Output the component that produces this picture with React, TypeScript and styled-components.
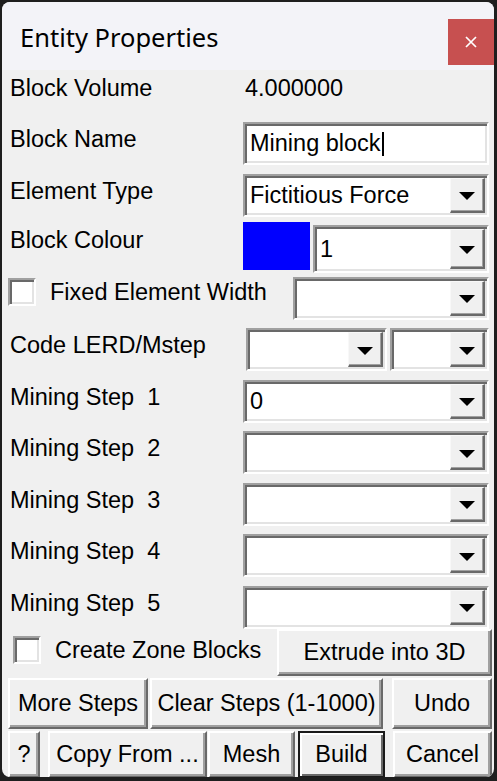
import React from "react";
import styled, { createGlobalStyle } from "styled-components";

const Global = createGlobalStyle`
  html, body { margin: 0; padding: 0; background: #1e1e1e; }
  body { width: 497px; height: 781px; overflow: hidden; }
  #root { padding: 2px 3px 4px 2px; }
`;

const Window = styled.div`
  width: 492px;
  height: 775px;
  background: #f0f0f0;
  border-radius: 8px;
  overflow: hidden;
  display: flex;
  flex-direction: column;
  font-family: "Liberation Sans", Arial, sans-serif;
  font-size: 23.5px;
  color: #000;
`;

const TitleBar = styled.div`
  height: 68px;
  flex: none;
  background: #f3f3f8;
  display: flex;
  align-items: flex-start;
  justify-content: space-between;
`;

const Title = styled.div`
  font-family: "Noto Sans", "Open Sans", sans-serif;
  font-size: 25.5px;
  line-height: 34px;
  padding: 18px 0 0 18px;
`;

const CloseButton = styled.div`
  width: 46px;
  height: 46px;
  margin-top: 17px;
  background: #c75050;
  display: flex;
  align-items: center;
  justify-content: center;
`;

const Form = styled.div`
  display: grid;
  grid-template-columns: 233px 246px;
  grid-auto-rows: 43px;
  row-gap: 8.5px;
  padding: 0.5px 5px 0 8px;
`;

const Label = styled.div<{ $pt?: number }>`
  line-height: 27px;
  padding-top: ${(p) => p.$pt ?? 4}px;
  white-space: pre;
`;

const Value = styled(Label)`
  padding-left: 2px;
`;

const Field = styled.div`
  display: flex;
  align-items: flex-start;
`;

const Sunken = styled.div<{ $w?: number; $h?: number; $ml?: number; $mr?: number }>`
  box-sizing: border-box;
  flex: none;
  width: ${(p) => (p.$w ? `${p.$w}px` : "100%")};
  height: ${(p) => p.$h ?? 43}px;
  margin-left: ${(p) => p.$ml ?? 0}px;
  margin-right: ${(p) => p.$mr ?? 0}px;
  border: 2px solid;
  border-color: #a0a0a0 #ffffff #ffffff #a0a0a0;
  box-shadow: inset 2px 2px 0 #696969, inset -2px -2px 0 #e3e3e3;
  padding: 2px;
  background: #fff;
  display: flex;
  align-items: stretch;
`;

const FieldText = styled.div`
  flex: 1;
  min-width: 0;
  padding-left: 3px;
  display: flex;
  align-items: center;
  white-space: pre;
  overflow: hidden;
`;

const Caret = styled.span`
  display: inline-block;
  width: 2px;
  height: 24px;
  background: #000;
  margin-left: 1px;
`;

const DropButton = styled.div`
  width: 35px;
  flex: none;
  box-sizing: border-box;
  background: #f0f0f0;
  border-style: solid;
  border-width: 1px 2px 2px 1px;
  border-color: #f8f8f8 #696969 #696969 #f8f8f8;
  box-shadow: inset -1px -1px 0 #a0a0a0;
  display: flex;
  align-items: center;
  justify-content: center;
  &::after {
    content: "";
    border-left: 8px solid transparent;
    border-right: 8px solid transparent;
    border-top: 8px solid #000;
    margin-top: 3px;
  }
`;

const Swatch = styled.div`
  width: 67px;
  height: 48px;
  margin-top: -3px;
  margin-right: 3px;
  background: #0000ff;
  flex: none;
`;

const CheckCell = styled.div`
  display: flex;
  align-items: flex-start;
  margin-left: -2px;
  white-space: nowrap;
`;

const CheckBox = styled.div<{ $mt?: number }>`
  width: 28px;
  height: 28px;
  flex: none;
  box-sizing: border-box;
  margin-top: ${(p) => p.$mt ?? 0}px;
  background: #fff;
  border: 2px solid;
  border-color: #a0a0a0 #ffffff #ffffff #a0a0a0;
  box-shadow: inset 2px 2px 0 #696969, inset -2px -2px 0 #e3e3e3;
`;

const CheckText = styled.div<{ $pt?: number }>`
  margin-left: 14px;
  line-height: 27px;
  padding-top: ${(p) => p.$pt ?? 0}px;
`;

const Footer = styled.div`
  display: flex;
  flex-direction: column;
  gap: 2px;
  padding: 0 2px 0 6px;
`;

const FooterRow = styled.div<{ $h: number }>`
  display: flex;
  height: ${(p) => p.$h}px;
  flex: none;
`;

const CheckArea = styled.div`
  width: 269px;
  display: flex;
  align-items: center;
  padding-left: 5px;
  box-sizing: border-box;
  margin-top: -4px;
`;

const Btn = styled.div<{ $w: number; $ml?: number; $default?: boolean }>`
  box-sizing: border-box;
  width: ${(p) => p.$w}px;
  margin-left: ${(p) => p.$ml ?? 0}px;
  height: 100%;
  flex: none;
  background: #f0f0f0;
  border: 2px solid;
  border-color: ${(p) => (p.$default ? "#1a1a1a" : "#ffffff #696969 #696969 #ffffff")};
  box-shadow: ${(p) =>
    p.$default
      ? "inset 2px 2px 0 #ffffff, inset -2px -2px 0 #696969"
      : "inset -2px -2px 0 #a0a0a0"};
  display: flex;
  align-items: center;
  justify-content: center;
  white-space: pre;
  line-height: 27px;
`;

const Combo = ({ w, h, ml, mr, text }: { w?: number; h?: number; ml?: number; mr?: number; text?: string }) => (
  <Sunken $w={w} $h={h} $ml={ml} $mr={mr}>
    <FieldText>{text ?? ""}</FieldText>
    <DropButton />
  </Sunken>
);

export default function App() {
  return (
    <>
      <Global />
      <Window>
        <TitleBar>
          <Title>Entity Properties</Title>
          <CloseButton>
            <svg width="12" height="12" viewBox="0 0 12 12">
              <path d="M1 1 L11 11 M11 1 L1 11" stroke="#fff" strokeWidth="1.7" />
            </svg>
          </CloseButton>
        </TitleBar>
        <Form>
          <Label $pt={4}>Block Volume</Label>
          <Value $pt={4}>4.000000</Value>

          <Label>Block Name</Label>
          <Field>
            <Sunken>
              <FieldText>
                Mining block
                <Caret />
              </FieldText>
            </Sunken>
          </Field>

          <Label>Element Type</Label>
          <Field>
            <Combo text="Fictitious Force" />
          </Field>

          <Label $pt={2}>Block Colour</Label>
          <Field>
            <Swatch />
            <Combo w={176} h={48} text="1" />
          </Field>

          <CheckCell>
            <CheckBox $mt={1} />
            <CheckText $pt={2}>Fixed Element Width</CheckText>
          </CheckCell>
          <Field>
            <Combo w={196} ml={50} />
          </Field>

          <Label>Code LERD/Mstep</Label>
          <Field>
            <Combo w={141} ml={3} mr={3} />
            <Combo w={99} />
          </Field>

          {[1, 2, 3, 4, 5].map((n) => (
            <React.Fragment key={n}>
              <Label>{`Mining Step  ${n}`}</Label>
              <Field>
                <Combo text={n === 1 ? "0" : ""} />
              </Field>
            </React.Fragment>
          ))}
        </Form>
        <Footer>
          <FooterRow $h={47}>
            <CheckArea>
              <CheckBox />
              <CheckText>Create Zone Blocks</CheckText>
            </CheckArea>
            <Btn $w={215}>Extrude into 3D</Btn>
          </FooterRow>
          <FooterRow $h={51}>
            <Btn $w={140}>More Steps</Btn>
            <Btn $w={233} $ml={2}>Clear Steps (1-1000)</Btn>
            <Btn $w={100} $ml={9}>Undo</Btn>
          </FooterRow>
          <FooterRow $h={47}>
            <Btn $w={32}>?</Btn>
            <Btn $w={159} $ml={8}>Copy From ...</Btn>
            <Btn $w={87} $ml={1}>Mesh</Btn>
            <Btn $w={87} $ml={3} $default>Build</Btn>
            <Btn $w={99} $ml={8}>Cancel</Btn>
          </FooterRow>
        </Footer>
      </Window>
    </>
  );
}
